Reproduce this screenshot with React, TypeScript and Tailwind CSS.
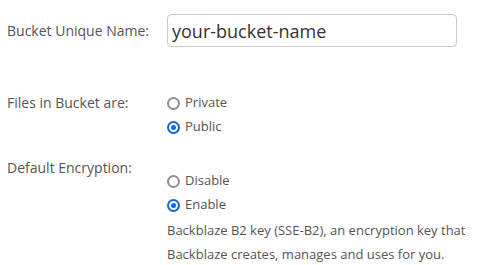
import React from "react";

function Radio({ label, checked }: { label: string; checked?: boolean }) {
  return (
    <div className="flex h-6 items-center gap-[5px] text-[13px] text-[#555]">
      {checked ? (
        <span className="flex h-[13px] w-[13px] items-center justify-center rounded-full border-2 border-[#0b67e0]">
          <span className="h-[5px] w-[5px] rounded-full bg-[#0b67e0]" />
        </span>
      ) : (
        <span className="h-[13px] w-[13px] rounded-full border-2 border-[#8f8f9d]" />
      )}
      <span>{label}</span>
    </div>
  );
}

export default function App() {
  return (
    <div
      className="w-[482px] h-[265px] bg-white pl-[7px] pt-[14px] text-[#555]"
      style={{ fontFamily: '"Open Sans", sans-serif' }}
    >
      <div className="flex items-center">
        <div className="w-[160px] text-[14px]">Bucket Unique Name:</div>
        <input
          type="text"
          defaultValue="your-bucket-name"
          className="h-[33px] w-[290px] rounded-[4px] border border-[#cccccc] px-[4px] text-[18px] text-[#333] outline-none"
        />
      </div>

      <div className="mt-[46px] flex">
        <div className="w-[160px] pt-[1px] text-[14px] leading-[18px]">Files in Bucket are:</div>
        <div className="-mt-[2px] flex flex-col">
          <Radio label="Private" />
          <Radio label="Public" checked />
        </div>
      </div>

      <div className="mt-[20px] flex">
        <div className="w-[160px] text-[14px] leading-[18px]">Default Encryption:</div>
        <div className="mt-[10px] flex flex-col">
          <Radio label="Disable" />
          <Radio label="Enable" checked />
          <p className="mt-[1px] text-[13px] leading-6">
            Backblaze B2 key (SSE-B2), an encryption key that
            <br />
            Backblaze creates, manages and uses for you.
          </p>
        </div>
      </div>
    </div>
  );
}
